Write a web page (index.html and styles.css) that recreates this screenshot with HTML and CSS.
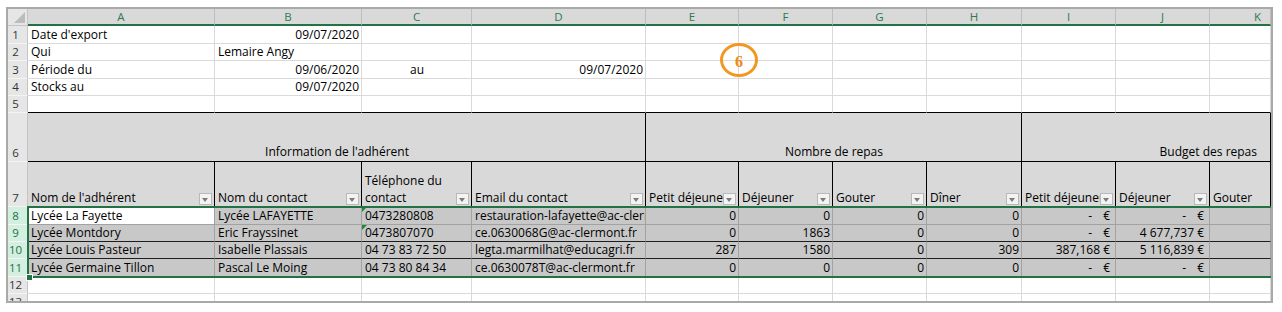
FILE: index.html
```html
<!DOCTYPE html>
<html lang="fr">
<head>
<meta charset="utf-8">
<title>Export</title>
<link rel="stylesheet" href="styles.css">
</head>
<body>
<div class="sheet">
  <div class="row colhdr">
    <div class="corner"></div>
    <div class="ch">A</div><div class="ch">B</div><div class="ch">C</div><div class="ch">D</div><div class="ch">E</div><div class="ch">F</div><div class="ch">G</div><div class="ch">H</div><div class="ch">I</div><div class="ch">J</div><div class="ch ch-k">K</div>
  </div>

  <div class="row h18">
    <div class="rh">1</div>
    <div class="c">Date d'export</div><div class="c num">09/07/2020</div><div class="c"></div><div class="c"></div><div class="c"></div><div class="c"></div><div class="c"></div><div class="c"></div><div class="c"></div><div class="c"></div><div class="c"></div>
  </div>
  <div class="row h17">
    <div class="rh">2</div>
    <div class="c">Qui</div><div class="c">Lemaire Angy</div><div class="c"></div><div class="c"></div><div class="c"></div><div class="c"></div><div class="c"></div><div class="c"></div><div class="c"></div><div class="c"></div><div class="c"></div>
  </div>
  <div class="row h18">
    <div class="rh">3</div>
    <div class="c">Période du</div><div class="c num">09/06/2020</div><div class="c ctr">au</div><div class="c num">09/07/2020</div><div class="c"></div><div class="c"></div><div class="c"></div><div class="c"></div><div class="c"></div><div class="c"></div><div class="c"></div>
  </div>
  <div class="row h17">
    <div class="rh">4</div>
    <div class="c">Stocks au</div><div class="c num">09/07/2020</div><div class="c"></div><div class="c"></div><div class="c"></div><div class="c"></div><div class="c"></div><div class="c"></div><div class="c"></div><div class="c"></div><div class="c"></div>
  </div>
  <div class="row h17 r5">
    <div class="rh">5</div>
    <div class="c"></div><div class="c"></div><div class="c"></div><div class="c"></div><div class="c"></div><div class="c"></div><div class="c"></div><div class="c"></div><div class="c"></div><div class="c"></div><div class="c"></div>
  </div>

  <div class="row r6">
    <div class="rh">6</div>
    <div class="c grp span4 ctr">Information de l'adhérent</div>
    <div class="c grp span4 ctr">Nombre de repas</div>
    <div class="c grp span3 num budget">Budget des repas</div>
  </div>

  <div class="row r7">
    <div class="rh">7</div>
    <div class="c th">Nom de l'adhérent<span class="dd"></span></div>
    <div class="c th">Nom du contact<span class="dd"></span></div>
    <div class="c th wrap">Téléphone du contact<span class="dd"></span></div>
    <div class="c th">Email du contact<span class="dd"></span></div>
    <div class="c th">Petit déjeuner<span class="dd"></span></div>
    <div class="c th">Déjeuner<span class="dd"></span></div>
    <div class="c th">Gouter<span class="dd"></span></div>
    <div class="c th">Dîner<span class="dd"></span></div>
    <div class="c th">Petit déjeuner<span class="dd"></span></div>
    <div class="c th">Déjeuner<span class="dd"></span></div>
    <div class="c th">Gouter</div>
  </div>

  <div class="row h18 d d8">
    <div class="rh rsel">8</div>
    <div class="c act">Lycée La Fayette</div>
    <div class="c">Lycée LAFAYETTE</div>
    <div class="c txtnum">0473280808</div>
    <div class="c">restauration-lafayette@ac-clermont.fr</div>
    <div class="c num">0</div><div class="c num">0</div><div class="c num">0</div><div class="c num">0</div>
    <div class="c acc"><span class="dash">-</span><span>€</span></div>
    <div class="c acc"><span class="dash">-</span><span>€</span></div>
    <div class="c"></div>
  </div>
  <div class="row h17 d dk">
    <div class="rh rsel">9</div>
    <div class="c">Lycée Montdory</div>
    <div class="c">Eric Frayssinet</div>
    <div class="c txtnum">0473807070</div>
    <div class="c">ce.0630068G@ac-clermont.fr</div>
    <div class="c num">0</div><div class="c num">1863</div><div class="c num">0</div><div class="c num">0</div>
    <div class="c acc"><span class="dash">-</span><span>€</span></div>
    <div class="c acc">4 677,737 €</div>
    <div class="c"></div>
  </div>
  <div class="row h17 d dk">
    <div class="rh rsel">10</div>
    <div class="c">Lycée Louis Pasteur</div>
    <div class="c">Isabelle Plassais</div>
    <div class="c">04 73 83 72 50</div>
    <div class="c">legta.marmilhat@educagri.fr</div>
    <div class="c num">287</div><div class="c num">1580</div><div class="c num">0</div><div class="c num">309</div>
    <div class="c acc">387,168 €</div>
    <div class="c acc">5 116,839 €</div>
    <div class="c"></div>
  </div>
  <div class="row h18 d">
    <div class="rh rsel">11</div>
    <div class="c">Lycée Germaine Tillon</div>
    <div class="c">Pascal Le Moing</div>
    <div class="c">04 73 80 84 34</div>
    <div class="c">ce.0630078T@ac-clermont.fr</div>
    <div class="c num">0</div><div class="c num">0</div><div class="c num">0</div><div class="c num">0</div>
    <div class="c acc"><span class="dash">-</span><span>€</span></div>
    <div class="c acc"><span class="dash">-</span><span>€</span></div>
    <div class="c"></div>
  </div>

  <div class="row h17">
    <div class="rh">12</div>
    <div class="c"></div><div class="c"></div><div class="c"></div><div class="c"></div><div class="c"></div><div class="c"></div><div class="c"></div><div class="c"></div><div class="c"></div><div class="c"></div><div class="c"></div>
  </div>
  <div class="row h17">
    <div class="rh">13</div>
    <div class="c"></div><div class="c"></div><div class="c"></div><div class="c"></div><div class="c"></div><div class="c"></div><div class="c"></div><div class="c"></div><div class="c"></div><div class="c"></div><div class="c"></div>
  </div>

  <div class="selbox"></div>
  <div class="handle"></div>
  <div class="marker">6</div>
</div>
</body>
</html>
```

FILE: styles.css
```css
html, body {
  margin: 0;
  background: #ffffff;
}
body {
  font-family: "Open Sans", "Liberation Sans", Arial, sans-serif;
  color: #000;
}
.sheet {
  position: relative;
  box-sizing: border-box;
  margin: 7px 0 0 6px;
  width: 1267px;
  height: 296px;
  border: 2px solid #a9a9a9;
  overflow: hidden;
  background: #fff;
}
.row {
  display: grid;
  grid-template-columns: 20px 187px 147px 110px 174px 93px 94px 94px 95px 94px 94px 61px;
}
.colhdr { height: 17px; }
.h17 { height: 17px; }
.h18 { height: 18px; }
.r6 { height: 49px; }
.r7 { height: 45px; }

/* column headers */
.corner {
  position: relative;
  box-sizing: border-box;
  background: #e6e6e6;
  border-right: 1px solid #c4c4c4;
  border-bottom: 1px solid #c4c4c4;
}
.corner::after {
  content: "";
  position: absolute;
  right: 2px;
  bottom: 2px;
  width: 0;
  height: 0;
  border-left: 11px solid transparent;
  border-bottom: 11px solid #bcbcbc;
}
.ch {
  box-sizing: border-box;
  background: #d9d9d9;
  border-right: 1px solid #bdbdbd;
  border-bottom: 2px solid #217346;
  display: flex;
  align-items: center;
  justify-content: center;
  font-size: 11.5px;
  line-height: 14px;
  color: #2e7a50;
}
.ch-k {
  justify-content: flex-end;
  padding-right: 9px;
}

/* row headers */
.rh {
  box-sizing: border-box;
  background: #e6e6e6;
  border-right: 1px solid #c4c4c4;
  border-bottom: 1px solid #f4f4f4;
  display: flex;
  align-items: flex-end;
  justify-content: center;
  padding: 0 4px 1px 0;
  font-size: 11.5px;
  line-height: 15px;
  color: #333;
}
.rsel {
  background: #d3efe0;
  color: #217346;
}

/* cells */
.c {
  position: relative;
  box-sizing: border-box;
  min-width: 0;
  border-right: 1px solid #dadada;
  border-bottom: 1px solid #dadada;
  padding: 0 2px 0 3px;
  display: flex;
  align-items: flex-end;
  white-space: nowrap;
  overflow: hidden;
  font-size: 12px;
  line-height: 16px;
}
.num { justify-content: flex-end; }
.ctr { justify-content: center; }

.r5 .c { border-bottom-color: #000; }

.grp {
  background: #d9d9d9;
  border-right-color: #000;
  border-bottom-color: #000;
  padding-bottom: 1px;
}
.span4 { grid-column: span 4; }
.span3 { grid-column: span 3; }
.budget { padding-right: 13px; }

.th {
  background: #d9d9d9;
  border-right-color: #000;
  border-bottom-color: #000;
  padding-bottom: 0;
}
.wrap {
  white-space: normal;
  line-height: 17px;
  padding-right: 16px;
}
.dd {
  position: absolute;
  right: 2px;
  bottom: 1px;
  box-sizing: border-box;
  width: 13px;
  height: 12px;
  border: 1px solid #b9b9b9;
  background: #f3f3f3;
}
.dd::after {
  content: "";
  position: absolute;
  left: 2px;
  top: 4px;
  width: 0;
  height: 0;
  border-left: 3.5px solid transparent;
  border-right: 3.5px solid transparent;
  border-top: 4px solid #7b7b7b;
}

/* data rows */
.d .c {
  background: #c8c8c8;
  border-right-color: #a2a2a2;
  border-bottom-color: #a2a2a2;
}
.dk .c { border-bottom-color: #1e1e1e; }
.d .act { background: #ffffff; }
.txtnum::before {
  content: "";
  position: absolute;
  left: 0;
  top: 0;
  width: 0;
  height: 0;
  border-top: 5px solid #1e8a3c;
  border-right: 5px solid transparent;
}
.acc {
  justify-content: flex-end;
  padding-right: 5px;
}
.dash { margin-right: 11px; }

/* overlays */
.selbox {
  position: absolute;
  left: 19px;
  top: 197px;
  width: 1260px;
  height: 72px;
  box-sizing: border-box;
  border: 2px solid #217346;
  pointer-events: none;
}
.handle {
  position: absolute;
  left: 18px;
  top: 265px;
  width: 5px;
  height: 5px;
  background: #217346;
  border: 1px solid #fff;
  box-sizing: content-box;
}
.marker {
  position: absolute;
  left: 712px;
  top: 34px;
  box-sizing: border-box;
  width: 38px;
  height: 34px;
  border: 3px solid #f2971f;
  border-radius: 50%;
  display: flex;
  align-items: center;
  justify-content: center;
  padding-top: 3px;
  font-family: "Liberation Serif", "Times New Roman", serif;
  font-weight: bold;
  font-size: 16px;
  color: #ee8a14;
}
```
